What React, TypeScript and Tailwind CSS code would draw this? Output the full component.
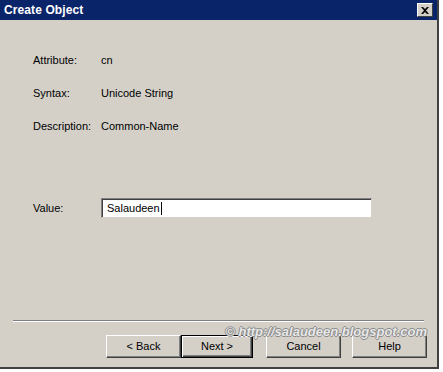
export default function App() {
  const btn =
    "w-[75px] h-[23px] bg-[#d4d0c8] text-[11px] text-black flex items-center justify-center border border-t-white border-l-white border-r-[#404040] border-b-[#404040] shadow-[inset_-1px_-1px_0_#808080]";
  return (
    <div className="w-[443px] h-[372px] bg-white font-['Liberation_Sans',Arial,sans-serif]">
      <div className="w-[439px] h-[369px] bg-[#d4d0c8] border-r-2 border-b-2 border-[#404040] flex flex-col">
        <div className="h-[20px] bg-[#0a246a] flex items-center justify-between pl-[4px] pr-[4px]">
          <span className="text-white font-bold text-[12px] tracking-[0.1px]">Create Object</span>
          <div className="w-[16px] h-[14px] bg-[#d4d0c8] border border-t-white border-l-white border-r-[#404040] border-b-[#404040] flex items-center justify-center">
            <svg width="8" height="7" viewBox="0 0 8 7">
              <path d="M0 0 L2 0 L4 2 L6 0 L8 0 L5 3.5 L8 7 L6 7 L4 5 L2 7 L0 7 L3 3.5 Z" fill="#000" />
            </svg>
          </div>
        </div>
        <div className="flex flex-col pl-[33px] pt-[33px] text-[11px] text-black">
          <div className="flex h-[14px] items-center">
            <span className="w-[68px]">Attribute:</span>
            <span>cn</span>
          </div>
          <div className="flex h-[14px] items-center mt-[19px]">
            <span className="w-[68px]">Syntax:</span>
            <span>Unicode String</span>
          </div>
          <div className="flex h-[14px] items-center mt-[19px]">
            <span className="w-[68px]">Description:</span>
            <span>Common-Name</span>
          </div>
          <div className="flex items-center mt-[65px]">
            <span className="w-[68px]">Value:</span>
            <div className="w-[271px] h-[20px] bg-white border border-t-[#808080] border-l-[#808080] border-r-[#d4d0c8] border-b-[#d4d0c8] shadow-[inset_1px_1px_0_#404040] flex items-center pl-[5px]">
              <span>Salaudeen</span>
              <span className="w-px h-[13px] bg-black ml-[1px]" />
            </div>
          </div>
        </div>
        <div className="relative mt-[102px] mx-[13px] h-[2px] border-t border-t-[#808080] border-b border-b-white">
          <span className="absolute right-[-3px] top-[1px] italic font-bold text-[13px] text-[#e8e8e8] whitespace-nowrap [text-shadow:1px_0_0_#8a8a8a,-1px_0_0_#8a8a8a,0_1px_0_#8a8a8a,0_-1px_0_#8a8a8a]">
            © http://salaudeen.blogspot.com
          </span>
        </div>
        <div className="flex mt-[13px] pl-[106px]">
          <div className={btn}>&lt; Back</div>
          <div className="w-[72px] h-[23px] bg-[#d4d0c8] text-[11px] text-black flex items-center justify-center border border-black shadow-[inset_1px_1px_0_#fff,inset_-1px_-1px_0_#404040,inset_-2px_-2px_0_#808080]">
            Next &gt;
          </div>
          <div className={`${btn} ml-[13px]`}>Cancel</div>
          <div className={`${btn} ml-[11px]`}>Help</div>
        </div>
      </div>
    </div>
  );
}
